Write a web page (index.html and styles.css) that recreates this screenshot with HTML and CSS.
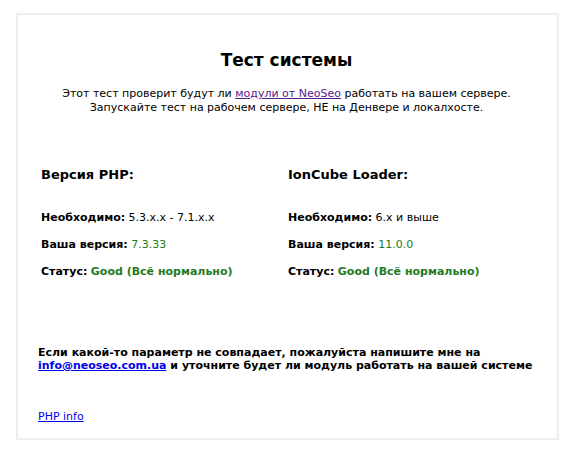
FILE: index.html
```html
<!DOCTYPE html>
<html lang="ru">
<head>
    <meta charset="UTF-8"/>
    <title>Тест системы</title>
    <link rel="stylesheet" href="styles.css">
</head>
<body>

<div class="test_container">
    <h1>Тест системы</h1>
    <p class="intro">
        Этот тест проверит будут ли <a href="#" class="visited_link">модули от NeoSeo</a> работать на вашем сервере.<br>
        Запускайте тест на рабочем сервере, НЕ на Денвере и локалхосте.
    </p>

    <div class="checks">
        <div class="check">
            <h2>Версия PHP:</h2>
            <div class="row"><b>Необходимо:</b> 5.3.x.x - 7.1.x.x</div>
            <div class="row"><b>Ваша версия:</b> <span class="good">7.3.33</span></div>
            <div class="row"><b>Статус:</b> <b class="good">Good (Всё нормально)</b></div>
        </div>
        <div class="check">
            <h2>IonCube Loader:</h2>
            <div class="row"><b>Необходимо:</b> 6.x и выше</div>
            <div class="row"><b>Ваша версия:</b> <span class="good">11.0.0</span></div>
            <div class="row"><b>Статус:</b> <b class="good">Good (Всё нормально)</b></div>
        </div>
    </div>

    <p class="note">
        Если какой-то параметр не совпадает, пожалуйста напишите мне на<br>
        <a href="#">info@neoseo.com.ua</a> и уточните будет ли модуль работать на вашей системе
    </p>

    <a href="#" class="phpinfo">PHP info</a>
</div>

</body>
</html>
```

FILE: styles.css
```css
body {
    margin: 0;
    font-family: Verdana, "DejaVu Sans", sans-serif;
    font-size: 11px;
    color: #000;
    background: #fff;
}

.test_container {
    margin: 13px 4px 0 16px;
    height: 427px;
    box-sizing: border-box;
    border: 2px solid #eeeeee;
    padding: 34px 22px 0 20px;
}

h1 {
    text-align: center;
    font-size: 17px;
    margin: 0 0 16px 0;
    line-height: 22px;
}

.intro {
    text-align: center;
    margin: 0;
    line-height: 14px;
}

a {
    color: #0000ee;
}

a.visited_link {
    color: #551a8b;
}

.checks {
    display: flex;
    margin-top: 52px;
    padding-left: 3px;
}

.check {
    width: 253px;
}

h2 {
    font-size: 13px;
    margin: 0 0 28px 0;
    line-height: 16px;
}

.row {
    line-height: 14px;
    margin-bottom: 13px;
}

.good {
    color: #237a23;
}

.note {
    font-weight: bold;
    margin: 54px 0 0 0;
    line-height: 13px;
}

.phpinfo {
    display: inline-block;
    margin-top: 38px;
}
```
